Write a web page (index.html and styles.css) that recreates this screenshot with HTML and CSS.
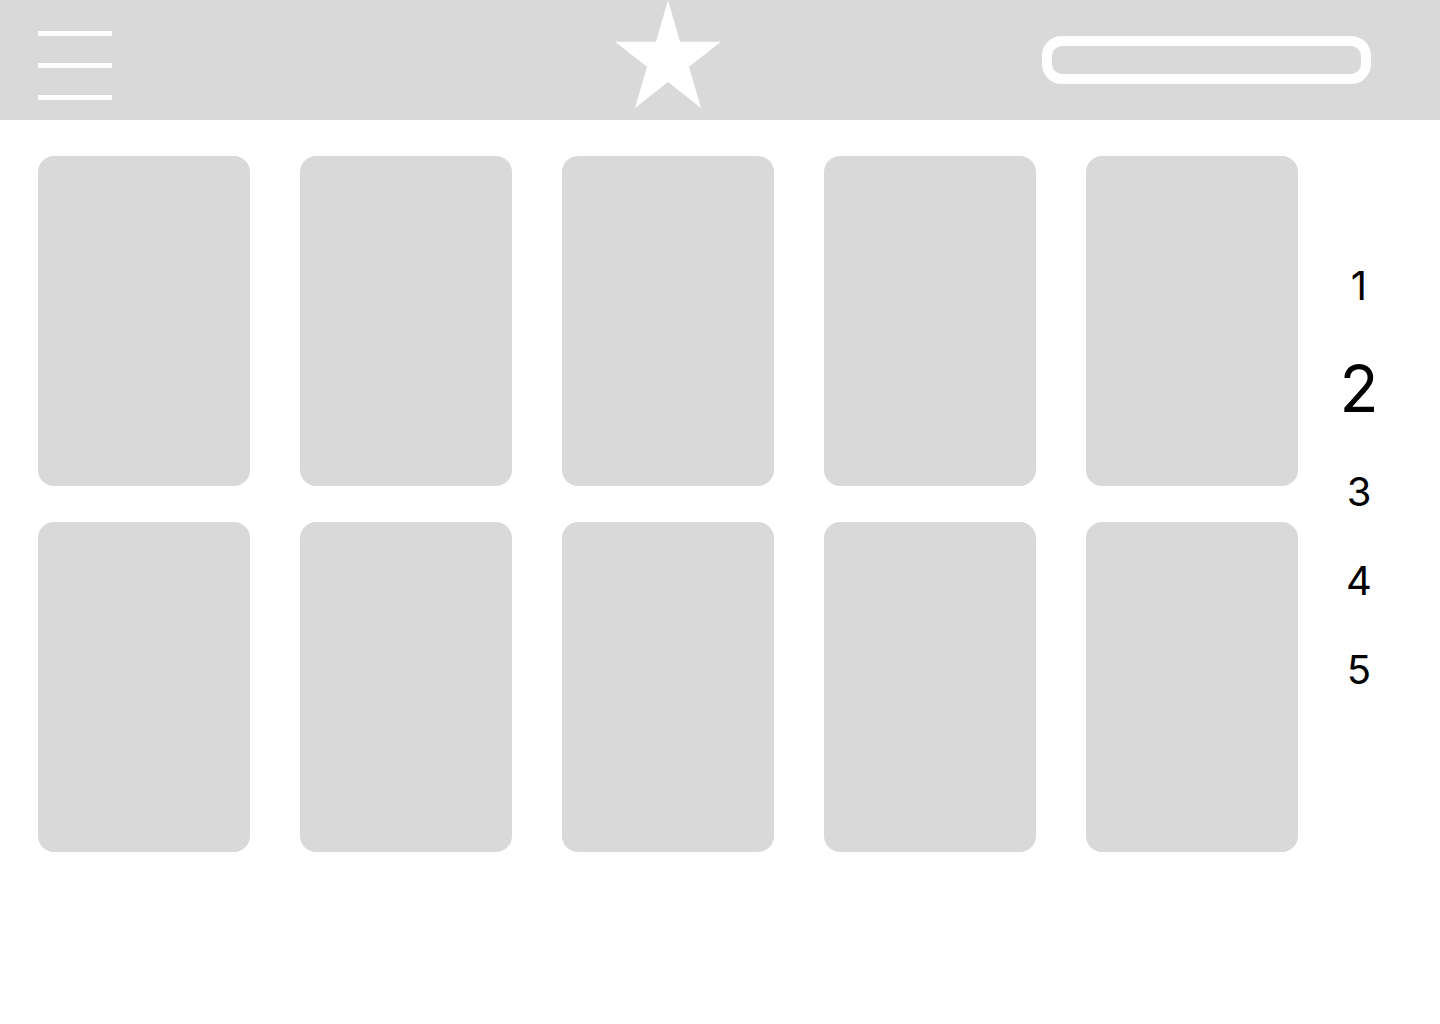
FILE: index.html
```html
<!DOCTYPE html>
<html lang="en">
<head>
    <meta charset="UTF-8">
    <meta name="viewport" content="width=device-width, initial-scale=1.0">
    <title>Gallery</title>
    <link rel="stylesheet" href="styles.css">
</head>
<body>

    <header class="topbar">
        <button class="menu-btn" type="button" aria-label="Menu">
            <svg width="74" height="69" viewBox="0 0 74 69">
                <rect x="0" y="0" width="74" height="5" fill="#fff"/>
                <rect x="0" y="32" width="74" height="5" fill="#fff"/>
                <rect x="0" y="64" width="74" height="5" fill="#fff"/>
            </svg>
        </button>

        <div class="logo">
            <svg width="106" height="108" viewBox="0 0 106 108">
                <polygon fill="#fff" points="53,0 65,41.7 106,41.7 74,66.7 86,108 53,82 20,108 32,66.7 0,41.7 41,41.7"/>
            </svg>
        </div>

        <div class="search"></div>
    </header>

    <main class="content">
        <!-- grid of cards -->
        <div class="cards">
            <div class="card"></div>
            <div class="card"></div>
            <div class="card"></div>
            <div class="card"></div>
            <div class="card"></div>
            <div class="card"></div>
            <div class="card"></div>
            <div class="card"></div>
            <div class="card"></div>
            <div class="card"></div>
        </div>

        <!-- page numbers -->
        <nav class="pages">
            <a href="#">1</a>
            <a href="#" class="active">2</a>
            <a href="#">3</a>
            <a href="#">4</a>
            <a href="#">5</a>
        </nav>
    </main>

</body>
</html>
```

FILE: styles.css
```css
body {
    margin: 0;
    font-family: Inter, "Noto Sans", sans-serif;
    background-color: #fff;
}
.topbar {
    height: 120px;
    background-color: #d9d9d9;
    display: flex;
    align-items: flex-start;
    padding-left: 38px;
}
.menu-btn {
    margin-top: 31px;
    padding: 0;
    border: none;
    background: none;
    line-height: 0;
    cursor: pointer;
}
.menu-btn svg, .logo svg {
    display: block;
}
.logo {
    margin-left: 503px;
}
.search {
    margin-top: 36px;
    margin-left: auto;
    margin-right: 69px;
    width: 329px;
    height: 48px;
    box-sizing: border-box;
    border: 10px solid #fff;
    border-radius: 20px;
    background-color: #d9d9d9;
}
.content {
    display: flex;
    align-items: flex-start;
    padding: 36px 0 0 38px;
}
.cards {
    display: grid;
    grid-template-columns: repeat(5, 212px);
    grid-auto-rows: 330px;
    column-gap: 50px;
    row-gap: 36px;
}
.card {
    background-color: #d9d9d9;
    border-radius: 16px;
}
.pages {
    width: 122px;
    padding-top: 105px;
    display: flex;
    flex-direction: column;
    align-items: center;
    gap: 40px;
}
.pages a {
    color: #000;
    text-decoration: none;
    font-size: 40px;
}
.pages a.active {
    font-size: 64px;
}
```
